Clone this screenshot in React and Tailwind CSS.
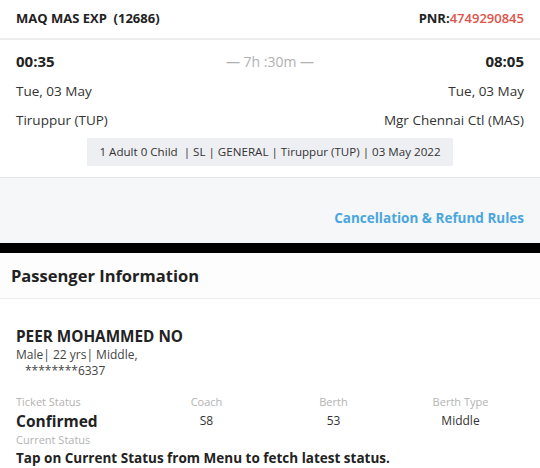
export default function App() {
  const f = { fontFamily: '"Open Sans", "Noto Sans", sans-serif' };
  return (
    <div className="w-[540px] h-[468px] overflow-hidden bg-white text-[#222]" style={f}>
      <div className="h-[40px] flex items-center justify-between px-4 border-b-2 border-[#ececec]">
        <div className="text-[13px] font-bold">MAQ MAS EXP&nbsp;&nbsp;(12686)</div>
        <div className="text-[13px] font-bold">PNR:<span className="text-[#e0534a] font-semibold">4749290845</span></div>
      </div>
      <div className="px-4 pt-[10px]">
        <div className="grid grid-cols-3 items-center h-[22px]">
          <div className="text-[15px] font-bold">00:35</div>
          <div className="text-[14px] text-[#b0b0b0] text-center">— 7h :30m —</div>
          <div className="text-[15px] font-bold text-right">08:05</div>
        </div>
        <div className="flex justify-between text-[13.5px] text-[#333] mt-[9px] h-[20px] items-center">
          <div>Tue, 03 May</div>
          <div>Tue, 03 May</div>
        </div>
        <div className="flex justify-between text-[13.5px] text-[#333] mt-[9px] h-[20px] items-center">
          <div>Tiruppur (TUP)</div>
          <div>Mgr Chennai Ctl (MAS)</div>
        </div>
        <div className="flex justify-center mt-[8px]">
          <div className="bg-[#eeeff2] h-[28px] px-[12px] flex items-center text-[11.6px] text-[#333]">
            1 Adult 0 Child&nbsp;&nbsp;| SL | GENERAL | Tiruppur (TUP) | 03 May 2022
          </div>
        </div>
      </div>
      <div className="mt-[11px] border-t border-[#e6e6e6] bg-[#f6f7f9] h-[66px] flex items-end justify-end pb-[15px] px-4">
        <div className="text-[13.5px] font-bold text-[#4aa6de]">Cancellation &amp; Refund Rules</div>
      </div>
      <div className="h-[10px] bg-black" />
      <div className="h-[46px] flex items-center px-[11px] border-b border-[#ececec] bg-[#fdfdfd]">
        <div className="text-[16.5px] font-bold text-[#222] mt-[1px]">Passenger Information</div>
      </div>
      <div className="px-4 pt-[27px]">
        <div className="text-[15.3px] font-bold leading-[20px]">PEER MOHAMMED NO</div>
        <div className="text-[12px] text-[#444] leading-[16px] mt-[1px]">Male| 22 yrs| Middle,</div>
        <div className="text-[12px] text-[#444] leading-[16px] pl-[9px]">********6337</div>
        <div className="grid grid-cols-4 mt-[15px]">
          <div className="text-[11px] text-[#b3b3b3] leading-[16px]">Ticket Status</div>
          <div className="text-[11px] text-[#b3b3b3] leading-[16px] text-center">Coach</div>
          <div className="text-[11px] text-[#b3b3b3] leading-[16px] text-center">Berth</div>
          <div className="text-[11px] text-[#b3b3b3] leading-[16px] text-center">Berth Type</div>
          <div className="text-[15.5px] font-bold leading-[22px]">Confirmed</div>
          <div className="text-[12px] text-[#333] leading-[22px] text-center">S8</div>
          <div className="text-[12px] text-[#333] leading-[22px] text-center">53</div>
          <div className="text-[12px] text-[#333] leading-[22px] text-center">Middle</div>
        </div>
        <div className="text-[11px] text-[#b3b3b3] leading-[16px]">Current Status</div>
        <div className="text-[13.5px] font-bold leading-[20px]">Tap on Current Status from Menu to fetch latest status.</div>
      </div>
    </div>
  );
}
